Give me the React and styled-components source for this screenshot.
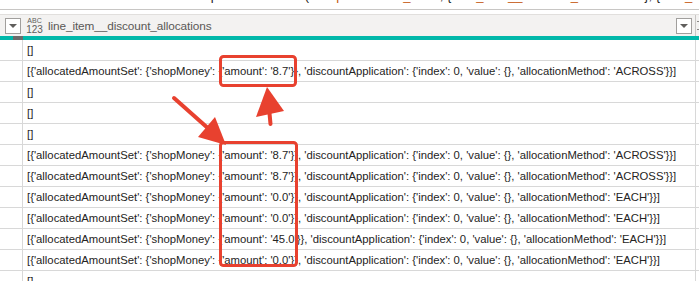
import React from 'react'
import styled, { createGlobalStyle } from 'styled-components'

const ACROSS = (amount) =>
  `[{'allocatedAmountSet': {'shopMoney': {'amount': '${amount}'}}, 'discountApplication': {'index': 0, 'value': {}, 'allocationMethod': 'ACROSS'}}]`
const EACH = (amount) =>
  `[{'allocatedAmountSet': {'shopMoney': {'amount': '${amount}'}}, 'discountApplication': {'index': 0, 'value': {}, 'allocationMethod': 'EACH'}}]`

const rows = [
  '[]',
  ACROSS('8.7'),
  '[]',
  '[]',
  '[]',
  ACROSS('8.7'),
  ACROSS('8.7'),
  EACH('0.0'),
  EACH('0.0'),
  EACH('45.0'),
  EACH('0.0'),
  '[]',
]

export default function App() {
  return (
    <>
      <GlobalStyle />
      <Page>
        <FormulaStrip>
          <FormulaText>
            = Table.ExpandListColumn(<Str>#"Expanded line_item"</Str>, {'{'}<Str>"line_item__discount_allocations"</Str>{'}'}, {'{'}<Str>"line_item__discount_allocations"</Str>{'}'})
          </FormulaText>
        </FormulaStrip>
        <Gap />
        <HeaderRow>
          <Corner>
            <DropButton><Caret /></DropButton>
          </Corner>
          <ColumnHead>
            <TypeIcon>
              <TypeTop>ABC</TypeTop>
              <TypeBottom>123</TypeBottom>
            </TypeIcon>
            <Title>line_item__discount_allocations</Title>
            <DropButton><Caret /></DropButton>
          </ColumnHead>
          <NextHead>
            <Dot />
            <Dot />
          </NextHead>
        </HeaderRow>
        <AccentBar>
          <Accent />
          <Accent $dark />
          <Accent />
        </AccentBar>
        <Body>
          {rows.map((text, i) => (
            <Row key={i}>
              <RowNum />
              <Cell>{text}</Cell>
              <Rest />
            </Row>
          ))}
        </Body>
        <Marks width="699" height="281" viewBox="0 0 699 281">
          <g fill="none" stroke="#e8412f" strokeWidth="3" strokeLinejoin="round">
            <rect x="220.5" y="56.5" width="75" height="29" rx="3" />
            <rect x="220.5" y="142.5" width="76" height="123" rx="3" />
          </g>
          <g stroke="#e8412f" strokeWidth="4" strokeLinecap="round">
            <line x1="174" y1="98" x2="210" y2="130" />
            <line x1="270.5" y1="124" x2="269" y2="108" />
          </g>
          <g fill="#e8412f">
            <polygon points="226,145 215,117 198,137" />
            <polygon points="267,87 256,117 284,111" />
          </g>
        </Marks>
      </Page>
    </>
  )
}

const GlobalStyle = createGlobalStyle`
  body {
    margin: 0;
    background: #ffffff;
    overflow: hidden;
  }
`

const Page = styled.div`
  position: relative;
  width: 699px;
  height: 281px;
  overflow: hidden;
  font-family: "Liberation Sans", Arial, sans-serif;
  color: #252423;
`

const FormulaStrip = styled.div`
  height: 9px;
  overflow: hidden;
  border-bottom: 1px solid #c8c6c4;
`

const FormulaText = styled.div`
  margin-top: -12px;
  padding-left: 150px;
  font-size: 13px;
  line-height: 16px;
  white-space: nowrap;
  color: #252423;
`

const Str = styled.span`
  color: #c55a11;
`

const Gap = styled.div`
  height: 4px;
`

const HeaderRow = styled.div`
  display: grid;
  grid-template-columns: 23px 673px 1fr;
  height: 21px;
  border-top: 1px solid #e1dfdd;
  background: #f3f2f1;
`

const Corner = styled.div`
  display: flex;
  align-items: center;
  padding-left: 5px;
`

const DropButton = styled.div`
  width: 14px;
  height: 14px;
  border: 1px solid #a19f9d;
  background: #ffffff;
  display: flex;
  align-items: center;
  justify-content: center;
`

const Caret = styled.span`
  width: 0;
  height: 0;
  border-left: 4px solid transparent;
  border-right: 4px solid transparent;
  border-top: 4px solid #605e5c;
`

const ColumnHead = styled.div`
  display: flex;
  align-items: center;
  padding: 0 3px 0 3px;
  border-right: 1px solid #c8c6c4;
`

const TypeIcon = styled.div`
  display: flex;
  flex-direction: column;
  align-items: center;
  width: 17px;
  color: #605e5c;
`

const TypeTop = styled.span`
  font-size: 7px;
  line-height: 8px;
`

const TypeBottom = styled.span`
  font-size: 10px;
  line-height: 10px;
`

const Title = styled.div`
  flex: 1;
  margin-left: 5px;
  font-size: 11.8px;
  letter-spacing: -0.1px;
  color: #5a5856;
`

const NextHead = styled.div`
  display: flex;
  flex-direction: column;
  justify-content: center;
  gap: 7px;
  padding-left: 1px;
`

const Dot = styled.span`
  width: 2px;
  height: 1px;
  background: #8a8886;
`

const AccentBar = styled.div`
  display: grid;
  grid-template-columns: 13px 10px 1fr;
  height: 4px;
`

const Accent = styled.div`
  background: ${(p) => (p.$dark ? '#6b6b6b' : '#01b8aa')};
`

const Body = styled.div`
  display: flex;
  flex-direction: column;
`

const Row = styled.div`
  display: grid;
  grid-template-columns: 23px 673px 1fr;
  height: 21px;
  box-sizing: border-box;
  border-bottom: 1px solid #d8d8d8;
`

const RowNum = styled.div`
  border-right: 1px solid #d8d8d8;
`

const Cell = styled.div`
  padding-left: 4px;
  font-size: 11.3px;
  line-height: 20px;
  white-space: nowrap;
  overflow: hidden;
  border-right: 1px solid #d8d8d8;
  color: #252423;
`

const Rest = styled.div``

const Marks = styled.svg`
  position: absolute;
  left: 0;
  top: 0;
  pointer-events: none;
`
